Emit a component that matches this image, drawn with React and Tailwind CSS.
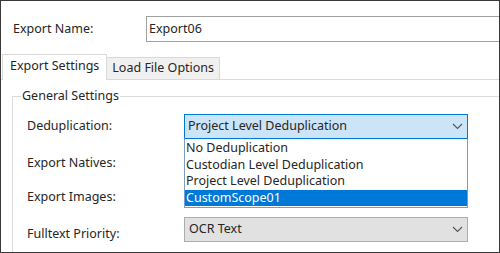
import React from 'react';

const FONT = { fontFamily: '"Noto Sans", "Open Sans", sans-serif' };

function Chevron() {
  return (
    <svg width="11" height="7" viewBox="0 0 11 7" className="shrink-0">
      <path d="M1 1 L5.5 5.5 L10 1" fill="none" stroke="#555" strokeWidth="1.1" />
    </svg>
  );
}

const OPTIONS = ['No Deduplication', 'Custodian Level Deduplication', 'Project Level Deduplication', 'CustomScope01'];

export default function App() {
  return (
    <div className="w-[500px] h-[253px] bg-white border border-[#3a3a3a] overflow-hidden text-[12.5px] text-[#262626] relative" style={FONT}>
      {/* export name */}
      <div className="flex items-center h-[26px] mt-[15px]">
        <span className="w-[145px] shrink-0 pl-[12px]">Export Name:</span>
        <div className="h-[26px] w-[400px] shrink-0 border border-[#a0a0a0] flex items-center pl-[2px]">Export06</div>
      </div>

      {/* tabs */}
      <div className="flex items-end mt-[11px] h-[26px] pl-[1px]">
        <div className="h-[26px] px-[7px] flex items-center bg-white border border-b-0 border-[#d9d9d9] relative z-10 -mb-px pb-[3px]">Export Settings</div>
        <div className="h-[22px] px-[5px] flex items-center bg-[#f0f0f0] border border-l-0 border-[#d9d9d9] border-b-0">Load File Options</div>
      </div>

      <div className="border-t border-[#d9d9d9] h-[200px] pl-[11px] pt-[8px]">
        <fieldset className="border border-[#dcdcdc] border-r-0 h-[200px] px-0 m-0">
          <legend className="ml-[8px] px-[1px] leading-[16px]">General Settings</legend>
          <div className="flex flex-col gap-[9px] mt-[10px] pl-[14px]">
            <div className="flex items-center h-[25px] relative">
              <span className="w-[157px] shrink-0">Deduplication:</span>
              <div className="w-[284px] shrink-0 h-[25px] border border-[#0078d7] bg-[#cce4f7] flex items-center justify-between pl-[3px] pr-[4px]">
                <span>Project Level Deduplication</span>
                <Chevron />
              </div>
              <div className="absolute left-[157px] top-[24px] w-[284px] bg-white border border-[#7a9cc6] border-t-[#0078d7] z-20 pt-[1px] pb-[1px] leading-[16.5px]">
                {OPTIONS.map((o, i) => (
                  <div key={o} className={i === 3 ? 'bg-[#0078d7] text-white pl-[1px]' : 'pl-[1px]'}>{o}</div>
                ))}
              </div>
            </div>
            <div className="flex items-center h-[25px]">
              <span className="w-[157px] pt-[5px]">Export Natives:</span>
            </div>
            <div className="flex items-center h-[25px]">
              <span className="w-[157px] pt-[5px]">Export Images:</span>
            </div>
            <div className="flex items-center h-[25px] mt-[1px]">
              <span className="w-[157px] shrink-0 pt-[9px]">Fulltext Priority:</span>
              <div className="w-[284px] shrink-0 h-[25px] border border-[#adadad] bg-[#e1e1e1] flex items-center justify-between pl-[4px] pr-[4px]">
                <span>OCR Text</span>
                <Chevron />
              </div>
            </div>
          </div>
        </fieldset>
      </div>
    </div>
  );
}
